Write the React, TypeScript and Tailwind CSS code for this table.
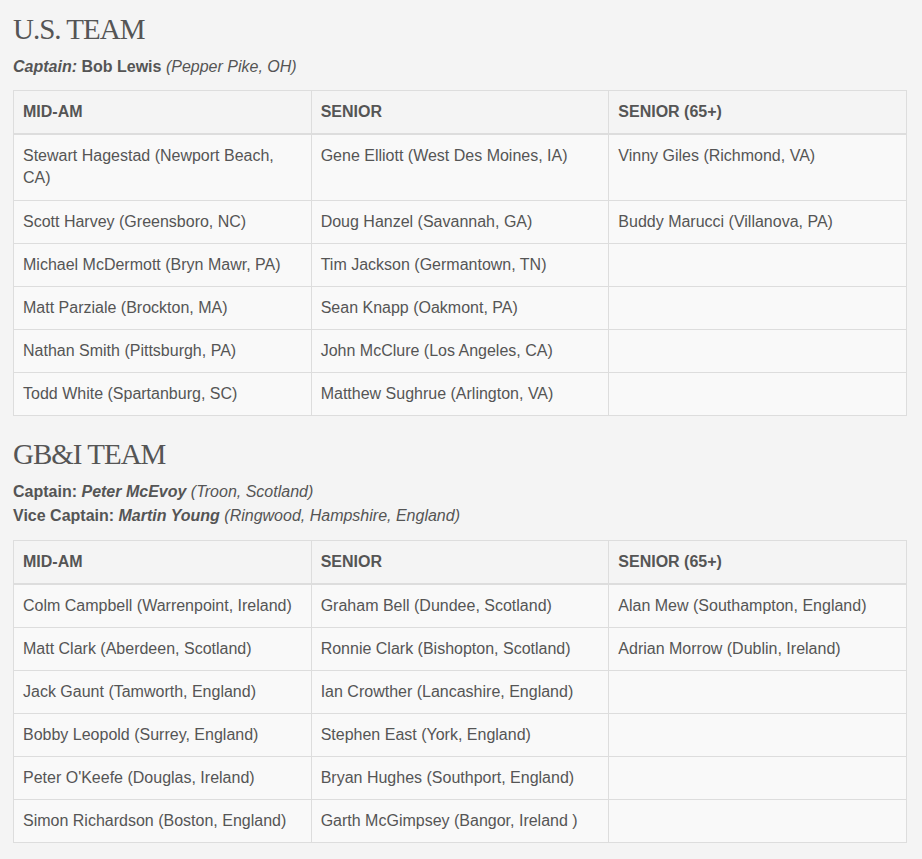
import React from "react";

type Row = [string, string, string];

const usRows: Row[] = [
  ["Stewart Hagestad (Newport Beach, CA)", "Gene Elliott (West Des Moines, IA)", "Vinny Giles (Richmond, VA)"],
  ["Scott Harvey (Greensboro, NC)", "Doug Hanzel (Savannah, GA)", "Buddy Marucci (Villanova, PA)"],
  ["Michael McDermott (Bryn Mawr, PA)", "Tim Jackson (Germantown, TN)", ""],
  ["Matt Parziale (Brockton, MA)", "Sean Knapp (Oakmont, PA)", ""],
  ["Nathan Smith (Pittsburgh, PA)", "John McClure (Los Angeles, CA)", ""],
  ["Todd White (Spartanburg, SC)", "Matthew Sughrue (Arlington, VA)", ""],
];

const gbRows: Row[] = [
  ["Colm Campbell (Warrenpoint, Ireland)", "Graham Bell (Dundee, Scotland)", "Alan Mew (Southampton, England)"],
  ["Matt Clark (Aberdeen, Scotland)", "Ronnie Clark (Bishopton, Scotland)", "Adrian Morrow (Dublin, Ireland)"],
  ["Jack Gaunt (Tamworth, England)", "Ian Crowther (Lancashire, England)", ""],
  ["Bobby Leopold (Surrey, England)", "Stephen East (York, England)", ""],
  ["Peter O'Keefe (Douglas, Ireland)", "Bryan Hughes (Southport, England)", ""],
  ["Simon Richardson (Boston, England)", "Garth McGimpsey (Bangor, Ireland )", ""],
];

function TeamTable({ rows, tallFirst }: { rows: Row[]; tallFirst?: boolean }) {
  return (
    <table className="w-[894px] table-fixed border-collapse border border-[#dddddd] text-[16px] leading-[22px] text-[#555555]">
      <thead>
        <tr className="bg-[#f4f4f4]">
          {["MID-AM", "SENIOR", "SENIOR (65+)"].map((h) => (
            <th
              key={h}
              className="border border-b-2 border-[#dddddd] px-[9px] py-[10px] text-left align-top font-bold"
            >
              {h}
            </th>
          ))}
        </tr>
      </thead>
      <tbody>
        {rows.map((r, i) => (
          <tr key={i} className="bg-[#f9f9f9]">
            {r.map((c, j) => (
              <td
                key={j}
                className={
                  tallFirst && i === 0 && j === 0
                    ? "border border-[#dddddd] px-[9px] pt-[10px] pb-[11px] align-top"
                    : "border border-[#dddddd] px-[9px] py-[10px] align-top"
                }
              >
                {c}
              </td>
            ))}
          </tr>
        ))}
      </tbody>
    </table>
  );
}

const serif = { fontFamily: '"Liberation Serif", "Times New Roman", serif' };

export default function App() {
  return (
    <div
      className="min-h-[859px] w-[922px] bg-[#f4f4f4] pl-[13px] pt-[13px] text-[#555555]"
      style={{ fontFamily: '"Liberation Sans", Arial, sans-serif' }}
    >
      <h2 className="text-[29px] font-normal leading-[33px] tracking-[-1px] text-[#555555]" style={serif}>
        U.S. TEAM
      </h2>
      <p className="mt-[9px] text-[16px] leading-[23px]">
        <b className="italic">Captain:</b> <b>Bob Lewis</b> <i>(Pepper Pike, OH)</i>
      </p>
      <div className="mt-[12px]">
        <TeamTable rows={usRows} tallFirst />
      </div>

      <h2 className="mt-[22px] text-[29px] font-normal leading-[33px] tracking-[-1px] text-[#555555]" style={serif}>
        GB&amp;I TEAM
      </h2>
      <p className="mt-[9px] text-[16px] leading-[24px]">
        <b>Captain:</b> <b className="italic">Peter McEvoy</b> <i>(Troon, Scotland)</i>
        <br />
        <b>Vice Captain:</b> <b className="italic">Martin Young</b> <i>(Ringwood, Hampshire, England)</i>
      </p>
      <div className="mt-[12px]">
        <TeamTable rows={gbRows} />
      </div>
    </div>
  );
}
